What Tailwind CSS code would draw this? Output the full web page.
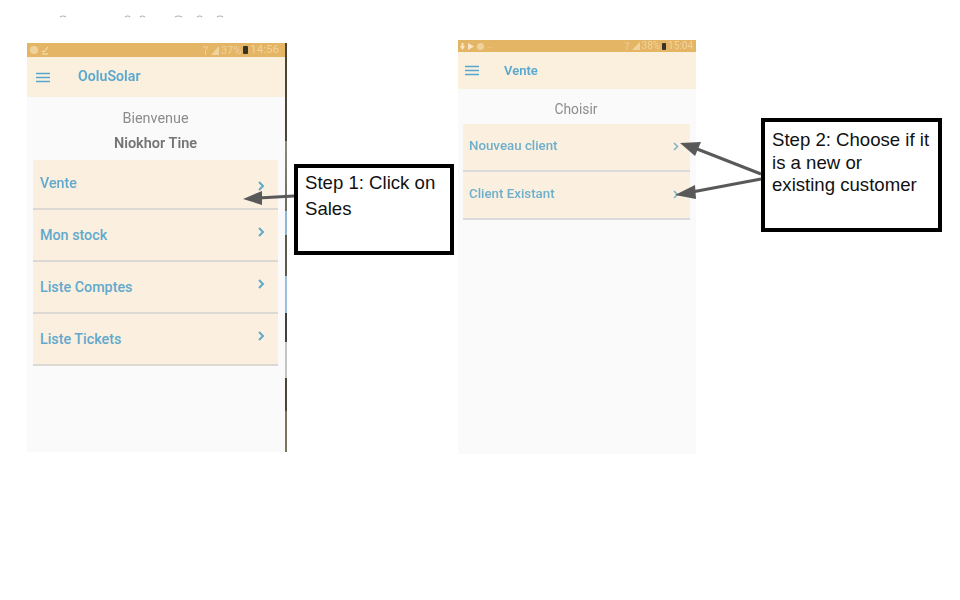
<!DOCTYPE html>
<html>
<head>
<meta charset="utf-8">
<script src="https://cdn.jsdelivr.net/npm/@tailwindcss/browser@4"></script>
</head>
<body class="bg-white">
<div class="relative w-[960px] h-[600px] overflow-hidden bg-white font-['Roboto',sans-serif]">

  <!-- clipped line of text at the top -->
  <svg class="absolute left-0 top-0" width="960" height="20" fill="none" stroke="#b5b5b5" stroke-width="1.2">
    <path d="M60 17q3-2 6 0M125 17q3-2 5 0M140 17q2-2 5 0M175 17q3-2 7 0M197 17q3-2 5 0M217 17q3-2 6 0"/>
  </svg>

  <!-- left phone -->
  <div class="absolute left-[27px] top-[43px] w-[258px] h-[409px] flex flex-col bg-[#fafafa] blur-[0.35px]">
    <div class="h-[14px] bg-[#e5b566] flex items-center justify-between pl-[3px] pr-[6px] text-[11px] leading-none text-[#f0d29c]">
      <div class="flex items-center gap-[3px]">
        <span class="w-[8px] h-[8px] rounded-full bg-[#f0d29c]"></span>
        <svg width="8" height="9" viewBox="0 0 8 9" fill="none" stroke="#f8e6c4" stroke-width="1"><path d="M1 5l2 1 4-5M1 8h6"/></svg>
      </div>
      <div class="flex items-center gap-[2px]">
        <svg width="7" height="9" viewBox="0 0 7 9" fill="none" stroke="#f0d29c" stroke-width="1"><path d="M1 1h5L3.500 4.500V9"/></svg>
        <svg width="8" height="9" viewBox="0 0 8 9" fill="#f0d29c"><path d="M0 9L8 0v9z"/></svg>
        <span>37%</span>
        <span class="w-[5px] h-[8px] bg-[#3a3226] rounded-[1px]"></span>
        <span class="text-[11.500px]">14:56</span>
      </div>
    </div>
    <div class="h-[40px] bg-[#fbf0dd] flex items-center pl-[9px]">
      <svg width="14" height="11" viewBox="0 0 14 11" fill="none" stroke="#55a7cf" stroke-width="1.5"><path d="M0 1.500h14M0 5.500h14M0 9.500h14"/></svg>
      <span class="ml-[28px] text-[14.200px] font-semibold text-[#5aa8d0]">OoluSolar</span>
    </div>
    <div class="flex flex-col items-center pr-[1px]">
      <div class="mt-[13px] h-[18px] leading-[18px] text-[14.400px] text-[#8c8c8c]">Bienvenue</div>
      <div class="mt-[7px] h-[18px] leading-[18px] text-[14.500px] font-semibold text-[#757575]">Niokhor Tine</div>
    </div>
    <div class="mt-[7px] ml-[6px] mr-[7px] flex flex-col">
      <div class="h-[50px] bg-[#fbf0df] border-b-2 border-[#dcd8d4] flex items-start justify-between pt-[13px] pl-[7px] pr-[13px]">
        <span class="text-[14.300px] leading-[20px] font-medium text-[#62a9cd]">Vente</span>
        <svg class="mt-[8px]" width="7" height="10" viewBox="0 0 7 10" fill="none" stroke="#5fa8c8" stroke-width="2"><path d="M1 1l4 4-4 4"/></svg>
      </div>
      <div class="h-[52px] bg-[#fbf0df] border-b-2 border-[#dcd8d4] flex items-start justify-between pt-[15px] pl-[7px] pr-[13px]">
        <span class="text-[14.300px] leading-[20px] font-medium text-[#62a9cd]">Mon stock</span>
        <svg class="mt-[2px]" width="7" height="10" viewBox="0 0 7 10" fill="none" stroke="#5fa8c8" stroke-width="2"><path d="M1 1l4 4-4 4"/></svg>
      </div>
      <div class="h-[52px] bg-[#fbf0df] border-b-2 border-[#dcd8d4] flex items-start justify-between pt-[15px] pl-[7px] pr-[13px]">
        <span class="text-[14.300px] leading-[20px] font-medium text-[#62a9cd]">Liste Comptes</span>
        <svg class="mt-[2px]" width="7" height="10" viewBox="0 0 7 10" fill="none" stroke="#5fa8c8" stroke-width="2"><path d="M1 1l4 4-4 4"/></svg>
      </div>
      <div class="h-[52px] bg-[#fbf0df] border-b-2 border-[#dcd8d4] flex items-start justify-between pt-[15px] pl-[7px] pr-[13px]">
        <span class="text-[14.300px] leading-[20px] font-medium text-[#62a9cd]">Liste Tickets</span>
        <svg class="mt-[2px]" width="7" height="10" viewBox="0 0 7 10" fill="none" stroke="#5fa8c8" stroke-width="2"><path d="M1 1l4 4-4 4"/></svg>
      </div>
    </div>
  </div>
  <!-- dark sliver at the phone's right edge -->
  <div class="absolute left-[285px] top-[43px] w-[2px] h-[409px] bg-[linear-gradient(to_bottom,#4a4538_0,#4a4538_24%,#8a8a80_24%,#6b6a60_41%,#8fb6d4_41%,#8fb6d4_47%,#5c5a50_47%,#5c5a50_57%,#9cc0dc_57%,#9cc0dc_66%,#3f3f3d_66%,#3f3f3d_73%,#c4c4c4_73%,#c4c4c4_82%,#4a4538_82%,#4a4538_90%,#7a7460_90%,#7a7460_100%)]"></div>

  <!-- right phone -->
  <div class="absolute left-[458px] top-[40px] w-[238px] h-[414px] flex flex-col bg-[#fafafa] blur-[0.35px]">
    <div class="h-[12px] bg-[#e5b566] flex items-center justify-between pl-[2px] pr-[3px] text-[10px] leading-none text-[#f0d39c]">
      <div class="flex items-center gap-[3px]">
        <svg width="5" height="7" viewBox="0 0 5 7" fill="#f8e6c4"><path d="M1.500 0h2v3H5L2.500 7 0 3h1.500z"/></svg>
        <svg width="6" height="7" viewBox="0 0 6 7" fill="#f8e6c4"><path d="M0 0l6 3.500L0 7z"/></svg>
        <span class="w-[7px] h-[7px] rounded-full bg-[#f0d39c]"></span>
        <span class="text-[8px]">...</span>
      </div>
      <div class="flex items-center gap-[2px]">
        <svg width="6" height="8" viewBox="0 0 7 9" fill="none" stroke="#f0d39c" stroke-width="1"><path d="M1 1h5L3.500 4.500V9"/></svg>
        <svg width="8" height="8" viewBox="0 0 8 8" fill="#f0d39c"><path d="M0 8L8 0v8z"/></svg>
        <span>38%</span>
        <span class="w-[4px] h-[7px] bg-[#3a3226] rounded-[1px]"></span>
        <span>15:04</span>
      </div>
    </div>
    <div class="h-[37px] bg-[#fbf0dd] flex items-center pl-[7px]">
      <svg width="14" height="11" viewBox="0 0 14 11" fill="none" stroke="#55a7cf" stroke-width="1.500"><path d="M0 1.500h14M0 5.500h14M0 9.500h14"/></svg>
      <span class="ml-[25px] text-[13px] font-semibold text-[#5aa8d0]">Vente</span>
    </div>
    <div class="mt-[12px] pr-[2px] h-[17px] leading-[17px] text-center text-[13.800px] text-[#8c8c8c]">Choisir</div>
    <div class="mt-[6px] mx-[5px] mr-[6px] flex flex-col">
      <div class="h-[48px] bg-[#fbf0df] border-b-2 border-[#d9dadb] flex items-start justify-between pt-[12px] pl-[6px] pr-[11px]">
        <span class="text-[13.300px] leading-[19px] font-medium text-[#6eb0cb]">Nouveau client</span>
        <svg class="mt-[6px]" width="6" height="9" viewBox="0 0 6 9" fill="none" stroke="#7fb5c8" stroke-width="1.600"><path d="M1 1l3.500 3.500L1 8"/></svg>
      </div>
      <div class="h-[48px] bg-[#fbf0df] border-b-2 border-[#d9dadb] flex items-start justify-between pt-[12px] pl-[6px] pr-[11px]">
        <span class="text-[13.300px] leading-[19px] font-medium text-[#6eb0cb]">Client Existant</span>
        <svg class="mt-[6px]" width="6" height="9" viewBox="0 0 6 9" fill="none" stroke="#7fb5c8" stroke-width="1.600"><path d="M1 1l3.500 3.500L1 8"/></svg>
      </div>
    </div>
  </div>

  <!-- callouts -->
  <div class="absolute left-[294px] top-[164px] w-[160px] h-[91px] border-4 border-black bg-white pl-[7px] pt-[2px] font-['Liberation_Sans',sans-serif] text-[18.600px] leading-[26px] text-[#111]">Step 1: Click on<br>Sales</div>
  <div class="absolute left-[761px] top-[118px] w-[181px] h-[114px] border-4 border-black bg-white pl-[7px] pt-[7px] font-['Liberation_Sans',sans-serif] text-[18.600px] leading-[22.500px] text-[#111]">Step 2: Choose if it<br>is a new or<br>existing customer</div>

  <!-- arrows -->
  <svg class="absolute left-0 top-0 pointer-events-none" width="960" height="600" fill="none">
    <path d="M294 196L258 198" stroke="#595959" stroke-width="3"/>
    <path d="M243 199L262 191L262 205z" fill="#595959"/>
    <path d="M761 174L692 147" stroke="#595959" stroke-width="3"/>
    <path d="M680 143L701 142L695 156z" fill="#595959"/>
    <path d="M761 179L692 192" stroke="#595959" stroke-width="3"/>
    <path d="M675 195L695 185L696 199z" fill="#595959"/>
  </svg>
</div>
</body>
</html>
